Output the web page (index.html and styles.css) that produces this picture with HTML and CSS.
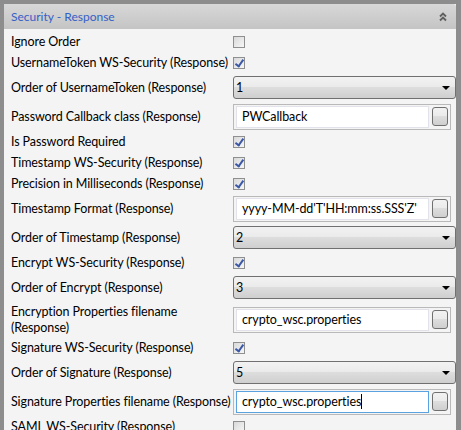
FILE: index.html
```html
<!DOCTYPE html>
<html lang="en">
<head>
    <meta charset="UTF-8">
    <title>Security - Response</title>
    <link rel="stylesheet" href="styles.css">
</head>
<body>
    <div class="panel">
        <div class="panel-head">
            <span class="title">Security - Response</span>
            <svg class="collapse" width="8" height="10" viewBox="0 0 8 10">
                <path d="M1 4.5 L4 1.5 L7 4.5 M1 8.5 L4 5.5 L7 8.5" fill="none" stroke="#5f5f5f" stroke-width="1.8"/>
            </svg>
        </div>

        <div class="props">
            <div class="prop row-check">
                <span class="label">Ignore Order</span>
                <span class="cb"></span>
            </div>
            <div class="prop row-check">
                <span class="label">UsernameToken WS-Security (Response)</span>
                <span class="cb checked"></span>
            </div>
            <div class="prop row-select">
                <span class="label">Order of UsernameToken (Response)</span>
                <div class="select"><span>1</span><i class="arrow"></i></div>
            </div>
            <div class="prop row-field">
                <span class="label">Password Callback class (Response)</span>
                <div class="field"><span class="input">PWCallback</span><span class="btn"></span></div>
            </div>
            <div class="prop row-check">
                <span class="label">Is Password Required</span>
                <span class="cb checked"></span>
            </div>
            <div class="prop row-check">
                <span class="label">Timestamp WS-Security (Response)</span>
                <span class="cb checked"></span>
            </div>
            <div class="prop row-check">
                <span class="label">Precision in Milliseconds (Response)</span>
                <span class="cb checked"></span>
            </div>
            <div class="prop row-field">
                <span class="label">Timestamp Format (Response)</span>
                <div class="field"><span class="input">yyyy-MM-dd'T'HH:mm:ss.SSS'Z'</span><span class="btn"></span></div>
            </div>
            <div class="prop row-select">
                <span class="label">Order of Timestamp (Response)</span>
                <div class="select"><span>2</span><i class="arrow"></i></div>
            </div>
            <div class="prop row-check">
                <span class="label">Encrypt WS-Security (Response)</span>
                <span class="cb checked"></span>
            </div>
            <div class="prop row-select">
                <span class="label">Order of Encrypt (Response)</span>
                <div class="select"><span>3</span><i class="arrow"></i></div>
            </div>
            <div class="prop row-field tall">
                <span class="label">Encryption Properties filename<br>(Response)</span>
                <div class="field"><span class="input">crypto_wsc.properties</span><span class="btn"></span></div>
            </div>
            <div class="prop row-check">
                <span class="label">Signature WS-Security (Response)</span>
                <span class="cb checked"></span>
            </div>
            <div class="prop row-select">
                <span class="label">Order of Signature (Response)</span>
                <div class="select"><span>5</span><i class="arrow"></i></div>
            </div>
            <div class="prop row-field">
                <span class="label">Signature Properties filename (Response)</span>
                <div class="field"><span class="input focus">crypto_wsc.properties<b class="caret"></b></span><span class="btn"></span></div>
            </div>
            <div class="prop row-check">
                <span class="label">SAML WS-Security (Response)</span>
                <span class="cb"></span>
            </div>
        </div>
    </div>
</body>
</html>
```

FILE: styles.css
```css
body {
    margin: 0;
    font-family: Lato, "Open Sans", sans-serif;
    font-size: 12.5px;
    letter-spacing: -0.1px;
    color: #000;
    background: #8d8d8d;
}
.panel {
    border-top: 4px solid #8d8d8d;
    border-left: 4px solid #8d8d8d;
    border-right: 5px solid #8d8d8d;
    background: #f4f4f4;
    height: 426px;
    overflow: hidden;
}
.panel-head {
    height: 25px;
    display: flex;
    align-items: center;
    justify-content: space-between;
    padding: 0 9px 0 7px;
    background: linear-gradient(#d8d8d8, #c4c4c4);
    border-top-right-radius: 3px;
}
.title {
    color: #3560c8;
    font-size: 12px;
    letter-spacing: 0;
}
.collapse {
    display: block;
}
.props {
    padding-top: 2px;
}
.prop {
    display: flex;
    align-items: center;
}
.label {
    width: 222px;
    padding-left: 7px;
    flex: none;
    line-height: 16px;
    white-space: nowrap;
}
.row-check {
    height: 21px;
}
.row-select {
    height: 29px;
}
.row-field {
    height: 29px;
}
.row-field.tall {
    height: 35px;
}

/* checkbox */
.cb {
    width: 10px;
    height: 10px;
    border: 1px solid #8e8f8f;
    background: linear-gradient(135deg, #d9d9d9, #f6f6f6);
    position: relative;
}
.cb.checked::after {
    content: "";
    position: absolute;
    left: 3px;
    top: 0;
    width: 3px;
    height: 7px;
    border: solid #3a57a8;
    border-width: 0 2px 2px 0;
    transform: rotate(35deg);
}

/* combo box */
.select {
    width: 215px;
    height: 21px;
    border: 1px solid #707070;
    border-radius: 3px;
    background: linear-gradient(#f2f2f2 0%, #ebebeb 45%, #dddddd 50%, #cfcfcf 100%);
    display: flex;
    align-items: center;
    justify-content: space-between;
    padding: 0 5px 0 2px;
}
.arrow {
    width: 0;
    height: 0;
    border-left: 4px solid transparent;
    border-right: 4px solid transparent;
    border-top: 4px solid #000;
}

/* text field with browse button */
.field {
    width: 212px;
    height: 22px;
    border: 1px solid #b9b9b9;
    padding: 1px 2px;
    display: flex;
    align-items: center;
    gap: 3px;
}
.input {
    flex: 1;
    height: 20px;
    border: 1px solid #e2e3ea;
    background: #fff;
    padding-left: 5px;
    display: flex;
    align-items: center;
    white-space: nowrap;
    overflow: hidden;
}
.input.focus {
    border-color: #5ba3e0;
}
.caret {
    width: 1px;
    height: 15px;
    background: #000;
}
.btn {
    width: 14px;
    height: 17px;
    border: 1px solid #707070;
    border-radius: 3px;
    background: linear-gradient(#f2f2f2 0%, #ebebeb 45%, #dddddd 50%, #cfcfcf 100%);
}
```
